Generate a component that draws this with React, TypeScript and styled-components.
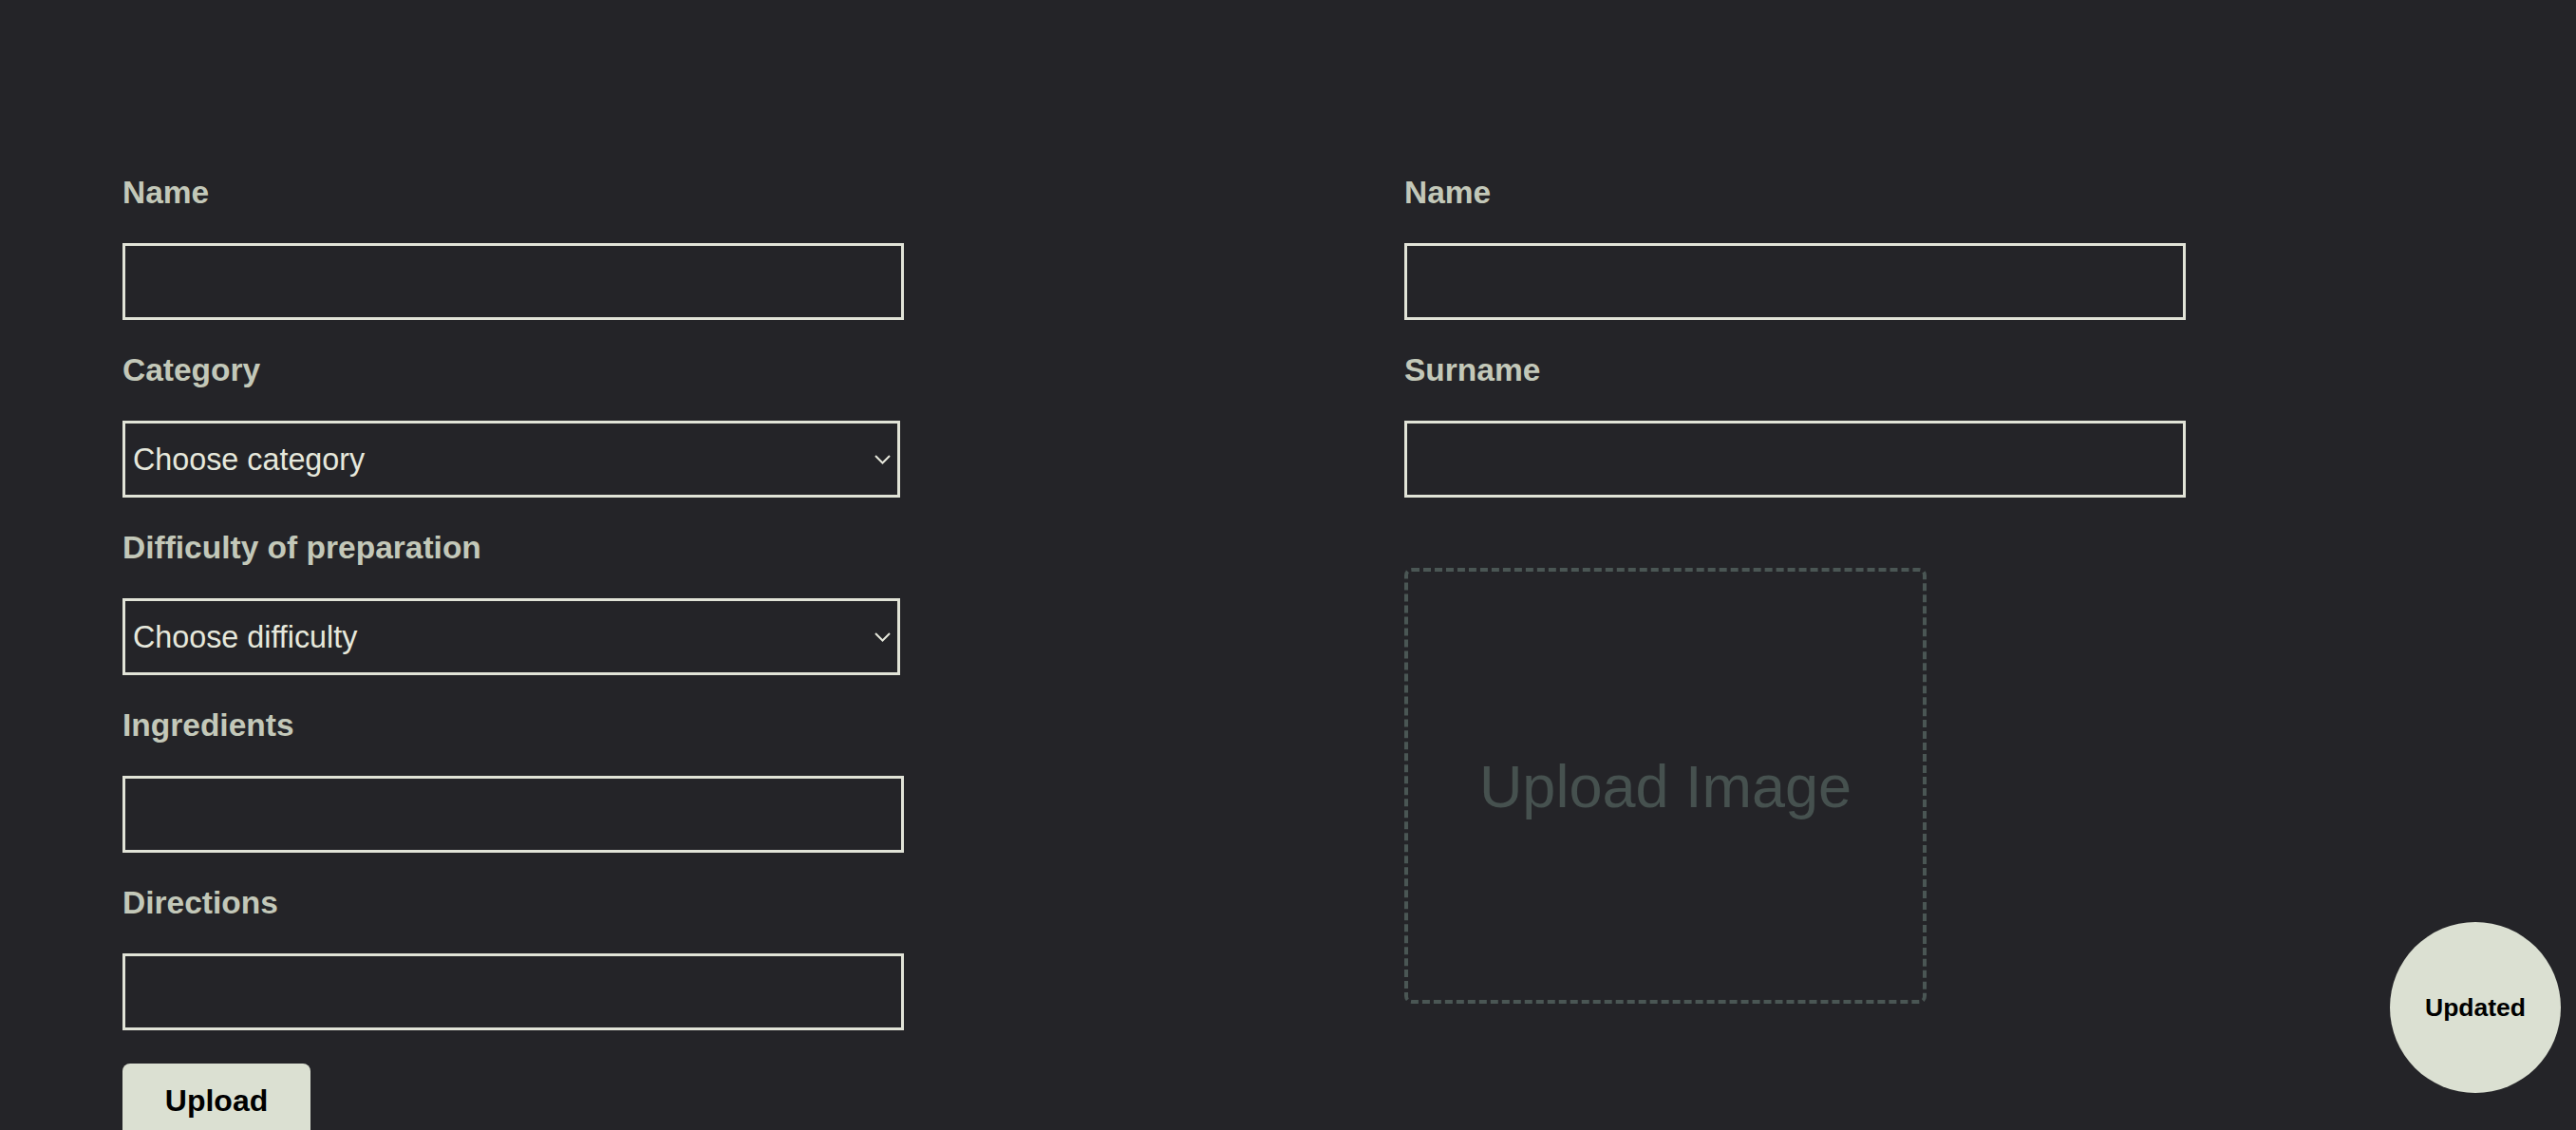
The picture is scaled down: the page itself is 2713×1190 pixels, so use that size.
import React from 'react';
import styled, { createGlobalStyle } from 'styled-components';

const GlobalStyle = createGlobalStyle`
  html, body {
    margin: 0;
    padding: 0;
    background: #242428;
    overflow: hidden;
    font-family: "Liberation Sans", Arial, sans-serif;
  }
`;

const Page = styled.div`
  display: grid;
  grid-template-columns: 1350px 1fr;
  padding: 185px 0 0 129px;
  min-height: 100vh;
  box-sizing: border-box;
`;

const Column = styled.form`
  display: flex;
  flex-direction: column;
  align-items: flex-start;
`;

const Label = styled.label`
  display: block;
  font-size: 33.5px;
  line-height: 36px;
  font-weight: 700;
  color: #c3c8b9;
  margin-bottom: 35px;
`;

const TextInput = styled.input`
  box-sizing: border-box;
  width: 823px;
  height: 81px;
  margin: 0 0 35px;
  padding: 0 8px;
  border: 3px solid #e1e3d7;
  border-radius: 0;
  background: transparent;
  color: #e6e8dc;
  font-family: inherit;
  font-size: 32px;
  outline: none;
`;

const SelectWrap = styled.div`
  position: relative;
  width: 819px;
  margin: 0 0 35px;
`;

const Select = styled.select`
  box-sizing: border-box;
  display: block;
  width: 100%;
  height: 81px;
  margin: 0;
  padding: 0 40px 0 8px;
  border: 3px solid #e1e3d7;
  border-radius: 0;
  background: #242428;
  color: #e6e8dc;
  font-family: inherit;
  font-size: 32.3px;
  outline: none;
  appearance: none;
  -webkit-appearance: none;
`;

const Chevron = styled.svg`
  position: absolute;
  right: 10px;
  top: 50%;
  width: 17px;
  height: 10px;
  margin-top: -5px;
  pointer-events: none;
`;

const SubmitButton = styled.button`
  width: 198px;
  padding: 21px 0 30px;
  border: none;
  border-radius: 8px;
  background: #dbe0d2;
  color: #000;
  font-family: inherit;
  font-size: 32px;
  font-weight: 700;
  cursor: pointer;
`;

const DropZone = styled.div`
  box-sizing: border-box;
  width: 550px;
  height: 459px;
  margin-top: 39px;
  border: 4px dashed #4a5654;
  border-radius: 8px;
  display: flex;
  align-items: center;
  justify-content: center;
  color: #46514f;
  font-size: 63px;
  cursor: pointer;
`;

const StatusBadge = styled.div`
  position: fixed;
  right: 16px;
  bottom: 39px;
  width: 180px;
  height: 180px;
  border-radius: 50%;
  background: #dbe0d2;
  color: #000;
  display: flex;
  align-items: center;
  justify-content: center;
  font-size: 26.5px;
  font-weight: 700;
`;

function Dropdown(props: { id: string; options: string[]; placeholder: string }) {
  return (
    <SelectWrap>
      <Select id={props.id} defaultValue="">
        <option value="">{props.placeholder}</option>
        {props.options.map(o => <option key={o} value={o.toLowerCase()}>{o}</option>)}
      </Select>
      <Chevron viewBox="0 0 17 10">
        <path d="M1 1 L8.5 8.5 L16 1" fill="none" stroke="#e6e8dc" strokeWidth="2" />
      </Chevron>
    </SelectWrap>
  );
}

export default function App() {
  return (
    <>
      <GlobalStyle />
      <Page>
        <Column onSubmit={e => e.preventDefault()}>
          <Label htmlFor="recipe-name">Name</Label>
          <TextInput id="recipe-name" type="text" />
          <Label htmlFor="recipe-category">Category</Label>
          <Dropdown id="recipe-category" placeholder="Choose category" options={['Breakfast', 'Lunch', 'Dinner']} />
          <Label htmlFor="recipe-difficulty">Difficulty of preparation</Label>
          <Dropdown id="recipe-difficulty" placeholder="Choose difficulty" options={['Easy', 'Medium', 'Hard']} />
          <Label htmlFor="recipe-ingredients">Ingredients</Label>
          <TextInput id="recipe-ingredients" type="text" />
          <Label htmlFor="recipe-directions">Directions</Label>
          <TextInput id="recipe-directions" type="text" />
          <SubmitButton type="submit">Upload</SubmitButton>
        </Column>
        <Column onSubmit={e => e.preventDefault()}>
          <Label htmlFor="author-name">Name</Label>
          <TextInput id="author-name" type="text" />
          <Label htmlFor="author-surname">Surname</Label>
          <TextInput id="author-surname" type="text" />
          <DropZone>Upload Image</DropZone>
        </Column>
      </Page>
      <StatusBadge>Updated</StatusBadge>
    </>
  );
}
